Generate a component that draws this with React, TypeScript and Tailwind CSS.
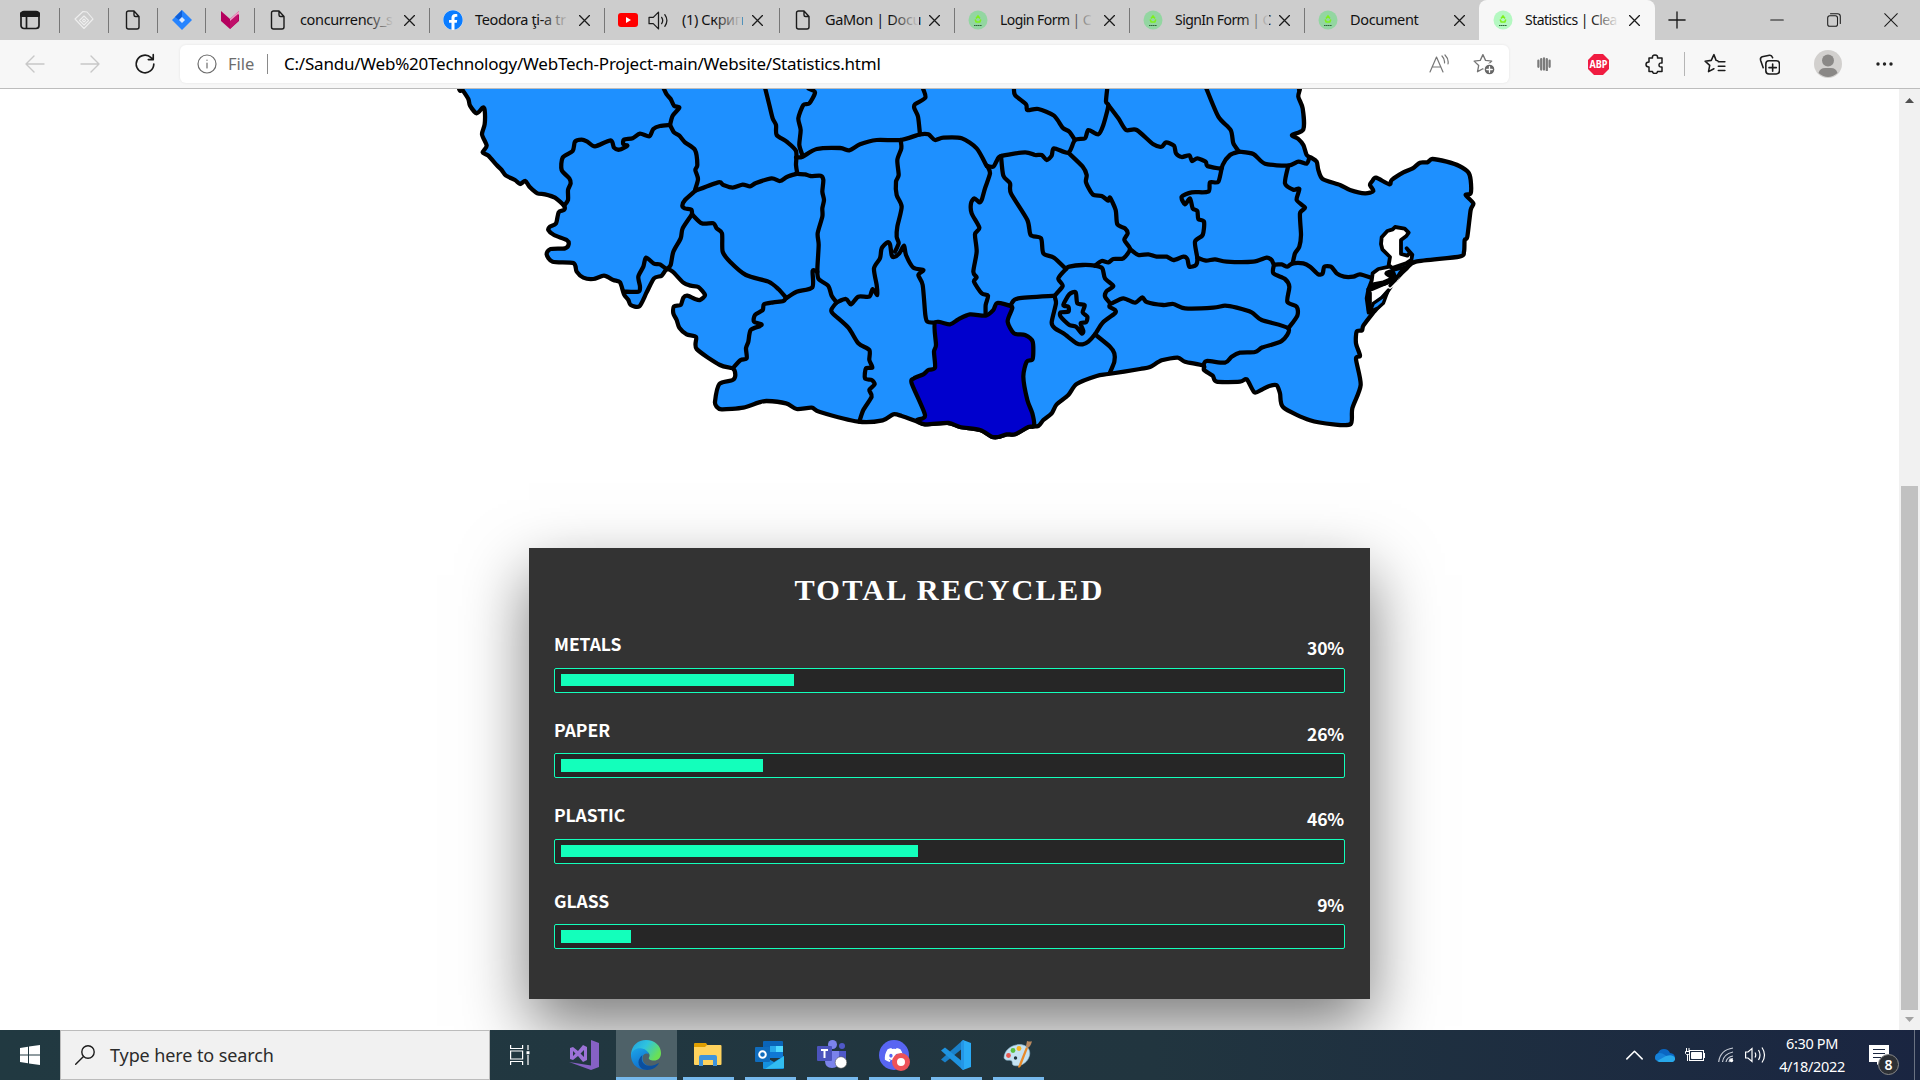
import React from "react";
import { FaDiscord, FaFacebook } from "react-icons/fa";

/* ---------- Map ---------- */

type Line = [number, string];

const parse = ([dx, s]: Line) =>
  s.trim().split(/\s+/).map((p) => {
    const [x, y] = p.split(",").map(Number);
    return [x + dx, y];
  });

function curve(pts: number[][], closed = false) {
  const n = pts.length;
  const at = (i: number) => (closed ? pts[(i + n) % n] : pts[Math.max(0, Math.min(n - 1, i))]);
  const k = 0.13;
  let d = `M${pts[0][0]} ${pts[0][1]}`;
  for (let i = 0; i < (closed ? n : n - 1); i++) {
    const a = at(i - 1), b = at(i), c = at(i + 1), e = at(i + 2);
    d += `C${b[0] + (c[0] - a[0]) * k} ${b[1] + (c[1] - a[1]) * k} ${c[0] - (e[0] - b[0]) * k} ${c[1] - (e[1] - b[1]) * k} ${c[0]} ${c[1]}`;
  }
  return closed ? d + "Z" : d;
}

const W = 0;
const M = 990;
const E = 1770;

const coast: Line[] = [
  [W, "-60,-400 20,-14 37,14 55,42 60,62 80,85 98,68 104,75 104,118 96,148 110,182 98,202 115,212 140,240 155,255 168,272 195,285 210,297 226,288 240,307 262,325 285,328 315,338 342,362 342,375 326,382 318,415 300,425 295,435 312,450 350,465 356,478 345,490 302,492 290,508 308,530 370,534 380,560 400,578 430,582 462,572 490,585 510,592 522,628 535,645 542,660 568,664 590,622 612,580 635,572 650,553 668,560 700,593 722,602 745,606 765,630 750,645 735,642 712,632 700,638 692,660 672,664 670,685 680,705 688,728 710,748 738,756 740,792 810,840 848,850 856,870 848,885 808,897 795,950 800,965 815,973 880,968 925,953 950,948"],
  [M, "18,955 50,972 95,968 120,981 235,1010 308,1006 340,988 365,993 412,1010 435,1018 505,1014 540,1026 600,1035 635,1055 655,1056 680,1048 705,1048 745,1026 775,1023 790,1005 815,985 830,958 865,930 890,897"],
  [E, "170,873 205,867 300,852 330,846 365,826 413,818 435,830 490,842 492,855 518,872 530,890 600,890 620,883 643,922 665,914 688,903 710,901 720,925 730,967 810,1006 880,1018 932,1017 937,970 962,900 948,822 960,812 948,775 950,740 966,736 970,722 998,685 1015,665 1045,615 1075,575 1100,550 1128,530 1258,515 1272,500 1274,465 1282,455 1292,375 1300,355 1277,330 1292,325 1292,285 1285,262 1258,243 1220,230 1177,222 1162,232 1140,233 1118,250 1090,262 1055,285 1048,298 1008,278 997,288 990,300 1000,318 975,325 930,315 900,300 848,282 835,255 830,230 812,217 800,210 790,180 775,162 756,150 790,133 788,70 775,35 780,10 776,-14 776,-400"],
];

const borders: Line[] = [
  [W, "640,8 650,28 662,42 672,62 688,68 668,92 660,120"],
  [W, "342,362 354,345 354,315 362,295 358,280 335,255 338,218 368,198 375,170 395,164 412,170 435,184 482,166 492,188 508,194 532,182 520,178 522,164 548,160 570,146 598,154 610,132 630,123 660,120"],
  [W, "660,120 672,142 688,152 705,172 735,195 742,240 736,255 744,282 735,315"],
  [W, "735,318 805,292 820,300 848,308 878,299 900,304 918,294 965,280 990,288 1012,275 1042,266"],
  [W, "735,318 705,345 697,362 704,370 724,374 726,388"],
  [W, "726,388 698,430 692,460 670,500 662,540 650,553"],
  [W, "726,388 755,415 790,415 800,430 816,445 818,500 840,530 888,570 955,590 985,612 1008,638"],
  [W, "945,8 958,60 968,100 978,120 980,150 1010,170 1038,198 1038,240 1042,266"],
  [W, "522,620 565,620 570,605 565,575 580,545 588,518 612,536 630,538 650,553"],
  [W, "1008,638 1000,648 970,652 942,658 938,675 915,690 912,710 934,718 930,723 902,735 895,770 888,790 890,820 872,825 848,850"],
  [M, "85,10 105,22 88,55 70,60 55,100 62,135 58,180 68,212"],
  [M, "48,217 68,215 110,192 180,189 208,196 240,178 290,165 362,165 420,148 445,148 465,165 490,158 545,160 590,190 620,243"],
  [M, "428,8 436,38 405,58 403,70 414,95 420,148"],
  [M, "48,266 75,268 92,273 122,272 130,285 127,320 132,345 127,370 127,395 113,445 116,480 112,555 116,582 145,603 155,632 170,652"],
  [M, "18,640 50,620 97,607 98,558 112,560"],
  [M, "362,165 364,190 352,225 356,270 348,290 350,330 365,365 352,425 350,455 356,475 345,500"],
  [M, "170,652 198,642 213,658 235,635 268,635 278,612 292,630 290,600 282,550 300,520 305,490 322,472 330,478 335,510 342,516 358,505 372,482 378,510 400,548 430,555 415,570 428,600 436,690 442,710 465,713"],
  [M, "170,652 155,672 158,685 205,728 235,775 268,795 268,825 277,848 258,850 255,880 275,885 284,898 268,915 275,935 250,975 238,1010"],
  [M, "622,243 640,245 650,228 663,213 735,202 765,210 785,210 800,225 815,212 822,190 865,203 885,165 915,160 925,135 955,148 970,120 985,62 978,50 982,8"],
  [M, "702,8 705,30 738,58 742,75 775,72 822,92 848,128 868,140 885,165"],
  [M, "622,243 630,265 615,310 605,345 598,352 583,340 573,355 575,385 598,428 585,448 590,500 580,560 590,577 582,590 605,625 624,632 617,660 617,690"],
  [M, "663,213 670,272 690,295 693,325 742,405 752,450 783,460 790,505 822,518 858,552"],
  [M, "865,203 908,245 920,270 918,292 938,328 965,333 985,347 990,338 1007,375 1012,418 1035,430 1043,445 1033,465 1050,492 1030,520 1000,522 985,532 965,528 945,542"],
  [M, "825,632 715,640 695,655 694,664"],
  [M, "945,748 990,785 1003,805 1003,830 990,862"],
  [E, "205,60 235,100 258,135 290,135 340,178 365,185 378,172 402,182 408,205 425,216 448,211 456,228 472,220 497,230 502,243 535,250 545,250"],
  [E, "498,8 535,95 572,135 580,175 597,200"],
  [E, "597,200 570,210 548,240 535,290 510,292 505,320 455,322 425,335 435,358 450,340 458,370 472,378 475,402 492,410 488,450 465,470 472,520 468,540 448,545 442,522 430,515 400,525 380,515 350,515 325,508 295,510 270,492"],
  [E, "597,200 640,207 675,236 745,242 775,230 800,236 808,218"],
  [E, "745,242 735,295 760,314 778,312 770,345 795,368 780,385 783,450 778,485 765,505 758,535"],
  [E, "472,518 498,527 525,523 560,530 640,530 680,518 695,525 702,538 725,538 742,545 758,535 790,535 810,545 835,568 848,565 853,545 873,545 890,565 912,575 940,575 960,568 998,580"],
  [E, "702,538 700,565 735,582 748,605 742,650 770,665 772,692 745,730"],
  [E, "215,655 250,640 285,653 307,637 320,651 370,660 400,657 435,670 520,668 555,662 590,668 635,682 665,705 745,730 725,768 668,787 645,801 600,803 575,815 555,833 500,828 490,842"],
];

const rings: Line[] = [
  [M, "945,542 908,540 868,545 858,552 835,580 848,603 825,632 828,655 815,712 825,730 850,745 890,775 908,778 925,770 945,748 968,713 1005,685 1005,675 988,665 990,655 975,635 980,618 1000,603 975,580 967,550"],
  [M, "887,622 868,628 850,660 865,665 865,680 842,682 842,695 868,720 888,725 905,745 910,738 902,715 918,712 922,695 908,682 914,660 892,655"],
];

const teleorman: Line = [M, "465,713 510,718 535,703 570,688 617,692 640,675 652,654 694,664 695,675 683,710 702,745 735,750 758,770 758,822 740,830 730,875 742,945 757,985 762,1023 745,1026 705,1048 680,1048 655,1056 635,1055 600,1035 540,1026 505,1014 435,1018 412,1005 435,990 395,895 402,880 430,868 445,855 465,848 462,800 468,780"];

function CountyMap() {
  return (
    <svg className="block h-[361px] w-[1899px]" viewBox="-1350 12 5697 1083" fill="none" stroke="#000" strokeWidth="12.800" strokeLinejoin="round" strokeLinecap="round">
      <path fill="#1e90ff" d={curve(coast.flatMap(parse), true)} />
      {borders.map((b, i) => <path key={i} d={curve(parse(b))} />)}
      {rings.map((b, i) => <path key={i} d={curve(parse(b), true)} />)}
      <path fill="#0000cd" d={curve(parse(teleorman), true)} />
      <g transform="translate(2550 375)" strokeWidth="11.500">
        <path fill="#fff" stroke="none" d="M268 172L235 178L218 190L215 215L205 240L200 265L206 300L222 275L258 245L285 228L300 200L275 190Z" />
        <path fill="#fff" d="M285 51L314 56L326 68L319 78L303 90V132L322 137L330 128L320 115L337 134L334 150L318 160L276 174L266 165L270 141L247 118L243 102L245 82L262 63L278 58Z" />
        <path d="M268 170L235 177L218 190L215 212L205 238L200 265L206 308" />
        <path strokeWidth="17" d="M208 238L222 225L250 220L285 205L262 190L270 187L292 198" />
        <path strokeWidth="15" d="M208 250L208 300M218 235L270 212" />
        <path fill="#1e90ff" strokeWidth="10" d="M210 305L220 280L245 263L265 240L250 280L235 293Z" />
        <path fill="#1e90ff" strokeWidth="10" d="M278 180L315 172L335 160L300 188L285 212L270 227L287 203Z" />
      </g>
    </svg>
  );
}

/* ---------- Browser chrome ---------- */

const Stroke = ({ size, children, color = "#1b1b1b", w = 1.4 }: { size: number; children: React.ReactNode; color?: string; w?: number }) => (
  <svg width={size} height={size} viewBox="0 0 20 20" fill="none" stroke={color} strokeWidth={w} strokeLinecap="round" strokeLinejoin="round" className="shrink-0">
    {children}
  </svg>
);

const PageIcon = () => (
  <Stroke size={20}><path d="M5.500 1H11l5 5.500V17a2 2 0 0 1-2 2H5.500a2 2 0 0 1-2-2V3a2 2 0 0 1 2-2M11 1v4a1.500 1.500 0 0 0 1.500 1.500H16" /></Stroke>
);

const CleanIcon = ({ active }: { active?: boolean }) => (
  <svg width="20" height="20" viewBox="0 0 20 20" className="shrink-0">
    <circle cx="10" cy="10" r="9.500" fill={active ? "#b4f8c1" : "#93d6a1"} />
    <path d="M8 8.500L10 6l2 2.500M12.800 9.500L11.800 12H8.200L7.200 9.500" fill="none" stroke="#7df01c" strokeWidth="1.600" />
    <path d="M6 15.500h8" stroke="#31623b" strokeWidth="1.200" strokeDasharray="1.500 .4" />
  </svg>
);

const YouTube = () => (
  <svg width="20" height="20" viewBox="0 0 20 20" className="shrink-0"><rect y="3" width="20" height="14" rx="3" fill="#f00" /><path d="M8 7v6l5-3z" fill="#fff" /></svg>
);

const Cross = () => <Stroke size={11} w={2.300}><path d="M1 1l18 18M19 1L1 19" /></Stroke>;

const Divider = () => <span className="h-[25px] w-px shrink-0 bg-[#777]" />;

function Tab({ icon, title, active, audio, tight }: { icon: React.ReactNode; title: string; active?: boolean; audio?: boolean; tight?: boolean }) {
  const fade = active ? "to-[#f7f7f7]" : "to-[#cdcdcd]";
  return (
    <div className={active ? "flex h-10 w-[176px] shrink-0 items-center rounded-t-lg bg-[#f7f7f7]" : "flex h-10 w-[175px] shrink-0 items-center"}>
      {active ? <span className="w-px" /> : <Divider />}
      <span className="ml-[13px] flex w-5">{icon}</span>
      {audio && (
        <span className="ml-[10px] flex">
          <Stroke size={21} w={1.200}><path d="M1 7h4l5-5v16l-5-5H1zM13 7q2 3 0 6M16 4.500q4 5.500 0 11" /></Stroke>
        </span>
      )}
      <span className={audio ? "relative ml-[13px] w-[60px] whitespace-nowrap" : "relative ml-3 w-[94px] whitespace-nowrap"}>
        <span className={tight ? "text-[14px] tracking-[-0.550px]" : ""}>{title}</span>
        {title !== "Document" && <span className={`absolute inset-y-0 right-0 w-7 bg-linear-to-r from-transparent ${fade}`} />}
      </span>
      <span className="ml-[10px] flex">
        <Cross />
      </span>
    </div>
  );
}

function TabStrip() {
  return (
    <div className="flex h-10 items-center bg-[#cdcdcd] text-[14.500px] tracking-[-0.35px] text-[#111]">
      <span className="flex w-[59px] shrink-0 justify-center">
        <Stroke size={20} w={1.700}><rect x="1" y="1.500" width="18" height="17" rx="3" /><path d="M2 4.500h16" strokeWidth="5" /><path d="M6.500 6v12" /></Stroke>
      </span>
      <Divider />
      <span className="flex w-12 shrink-0 justify-center">
        <Stroke size={20} color="#eee" w={1.100}><path d="M9 1.500l4 .5 6 7-9 9.500L1 9zM10 6l4.500 4.500L10 15l-4.500-4.500zM10 9l1.500 1.500L10 12l-1.500-1.500z" /></Stroke>
      </span>
      <Divider />
      <span className="flex w-12 shrink-0 justify-center"><PageIcon /></span>
      <Divider />
      <span className="flex w-[47px] shrink-0 justify-center">
        <svg width="20" height="20" viewBox="0 0 20 20"><path d="M10 0l10 10-10 10L0 10z" fill="#2684ff" /><path d="M10 0v7l-3 3-4-3z" fill="#0f5fd8" /><path d="M10 7l3 3-3 3-3-3z" fill="#dbe9ff" /></svg>
      </span>
      <Divider />
      <span className="flex w-12 shrink-0 justify-center">
        <svg width="20" height="18" viewBox="0 0 20 18"><path d="M1 0l9 8v10L1 10z" fill="#b4005e" /><path d="M19 0l-9 8v10l9-8z" fill="#b4005e" /><path d="M19 0l-9 8v4l9-9z" fill="#f0a0c8" /><path d="M18 3l-8 7v8l8-8z" fill="#c0106a" /></svg>
      </span>
      <Tab icon={<PageIcon />} title="concurrency_s" />
      <Tab icon={<span className="flex size-5 items-center justify-center rounded-full bg-white"><FaFacebook size={20} color="#0a7cff" /></span>} title="Teodora ţi-a tr" />
      <Tab icon={<YouTube />} title="(1) Скрип" audio />
      <Tab icon={<PageIcon />} title="GaMon | Docu" />
      <Tab icon={<CleanIcon />} title="Login Form | C" tight />
      <Tab icon={<CleanIcon />} title="SignIn Form | C" tight />
      <Tab icon={<CleanIcon />} title="Document" />
      <Tab icon={<CleanIcon active />} title="Statistics | Clea" active tight />
      <span className="ml-[13px] flex"><Stroke size={18} w={1.500}><path d="M10 1v18M1 10h18" /></Stroke></span>
      <span className="ml-auto flex items-center gap-[43px] pr-[22px]">
        <Stroke size={14} w={1.500}><path d="M1 10h18" /></Stroke>
        <Stroke size={14} w={1.500}><rect x="1" y="4" width="14" height="15" rx="3" /><path d="M5 1h10q4 0 4 4v10" /></Stroke>
        <Stroke size={14} w={1.500}><path d="M1 1l18 18M19 1L1 19" /></Stroke>
      </span>
    </div>
  );
}

const Star = "M9 1.500l2.400 5.200 5.600.7-4.200 3.900 1.100 5.700L9 14.300 4.100 17l1.100-5.700L1 7.400l5.600-.7z";

function Toolbar() {
  return (
    <div className="flex h-[49px] items-center border-b border-[#bdbdbd] bg-[#f7f7f7]">
      <span className="ml-[25px] flex"><Stroke size={20} color="#c8c8c8"><path d="M19 10H1M9 2l-8 8 8 8" /></Stroke></span>
      <span className="ml-[35px] flex"><Stroke size={20} color="#c8c8c8"><path d="M1 10h18M11 2l8 8-8 8" /></Stroke></span>
      <span className="ml-[34px] flex"><Stroke size={22} w={1.500}><path d="M18 10a8 8 0 1 1-2.500-5.800L17.500 6M17.500 1.500V6H13" /></Stroke></span>
      <div className="ml-[24px] flex h-[38px] w-[1329px] items-center rounded-md bg-white text-[17px] shadow-[0_0_3px_rgba(0,0,0,0.08)]">
        <span className="ml-[17px] flex"><Stroke size={20} color="#6d6d6d" w={1.200}><circle cx="10" cy="10" r="9" /><path d="M10 9v5M10 6v.3" /></Stroke></span>
        <span className="ml-[11px] w-[27px] text-[16.500px] text-[#6d6d6d]">File</span>
        <span className="ml-[12px] h-5 w-px bg-[#8a8a8a]" />
        <span className="ml-[16px] w-[610px] whitespace-nowrap text-[17px] tracking-[-0.220px] text-black">C:/Sandu/Web%20Technology/WebTech-Project-main/Website/Statistics.html</span>
        <span className="ml-auto mr-[24px] flex"><Stroke size={20} color="#767676" w={1.200}><path d="M1 18L7.500 3 14 18M3 13h9M13 2q3 3 2.500 7M16 1q4 4 3 9" /></Stroke></span>
        <span className="mr-[14px] flex">
          <Stroke size={22} color="#767676" w={1.200}><path d={Star} /><circle cx="15" cy="15" r="5" fill="#666" stroke="#fff" /><path d="M15 12.500v5M12.500 15h5" stroke="#fff" /></Stroke>
        </span>
      </div>
      <span className="ml-[28px] flex"><Stroke size={14} color="#7b7b7b" w={3.200}><path d="M2 5v9M6 3v15M10 2v16M14 3v16M18 5v9" /></Stroke></span>
      <svg className="ml-[37px]" width="21" height="21" viewBox="0 0 21 21">
        <path d="M6 0h9l6 6v9l-6 6H6l-6-6V6z" fill="#f01c41" />
        <text x="10.500" y="14.200" textAnchor="middle" fontSize="10" fontWeight="700" fill="#fff" fontFamily="Noto Sans" textLength="18" lengthAdjust="spacingAndGlyphs">ABP</text>
      </svg>
      <span className="ml-[36px] flex"><Stroke size={20} w={1.500}><path d="M4 4h3.500q-.5-3 2.500-3t2.500 3H17v5q-3-.5-3 2t3 2v4.500h-4.500q0 2-2.500 2t-2.500-2H4V13q-3 0-3-2.500T4 8z" /></Stroke></span>
      <span className="ml-[19px] h-[24px] w-px bg-[#b5b5b5]" />
      <span className="ml-[19px] flex"><Stroke size={22} w={1.400}><path d="M12.500 7.100L11 6.700 9 1.500 6.600 6.700 1 7.400l4.200 3.900L4.100 17 9 14.300M13 8h6M13 12h6M13 16h6" /></Stroke></span>
      <span className="ml-[33px] flex"><Stroke size={21} w={1.500}><rect x="6.500" y="6.500" width="13" height="12.500" rx="3" /><path d="M13 9.500v7M9.500 13h7M4 13L1.500 6q-.6-2.500 1.500-3.300l7-1.500q2-.3 3 2.300" /></Stroke></span>
      <svg className="ml-[34px]" width="28" height="28" viewBox="0 0 28 28"><circle cx="14" cy="14" r="14" fill="#d2d0ce" /><circle cx="14" cy="10.500" r="6" fill="#8a8886" /><path d="M4.500 23Q6 18 11 18h6q5 0 6.500 5-9.500 8-19 0z" fill="#8a8886" /></svg>
      <svg className="ml-[34px]" width="17" height="4" viewBox="0 0 17 4" fill="#222"><circle cx="2" cy="2" r="1.700" /><circle cx="8.500" cy="2" r="1.700" /><circle cx="15" cy="2" r="1.700" /></svg>
    </div>
  );
}

function Scrollbar() {
  return (
    <div className="flex h-full w-[21px] flex-col items-center bg-[#f1f1f1]">
      <svg className="mt-[9px]" width="9" height="5" viewBox="0 0 9 5"><path d="M0 5L4.500 0 9 5z" fill="#505050" /></svg>
      <div className="mt-[383px] h-[524px] w-[17px] bg-[#c1c1c1]" />
      <svg className="mt-[7px]" width="9" height="5" viewBox="0 0 9 5"><path d="M0 0l4.500 5L9 0z" fill="#a3a3a3" /></svg>
    </div>
  );
}

/* ---------- Statistics card ---------- */

const stats = [
  { name: "METALS", value: 30 },
  { name: "PAPER", value: 26 },
  { name: "PLASTIC", value: 46 },
  { name: "GLASS", value: 9 },
];

function StatsCard() {
  return (
    <section className="mx-auto mt-[98px] h-[451px] w-[841px] bg-[#333] px-[25px] pt-[25px] text-white shadow-[0_27px_62px_rgba(0,0,0,0.52)]">
      <h1 className="h-[57px] text-center font-['Liberation_Serif',serif] text-[30.300px] leading-[35px] font-bold tracking-[2.200px]">TOTAL RECYCLED</h1>
      {stats.map((s) => (
        <div key={s.name} className="h-[85.500px] font-['Noto_Sans_CJK_SC',sans-serif] text-[17.500px] font-bold">
          <div className="flex h-[37.800px] justify-between leading-[27.500px]">
            <span className="tracking-[-0.050px]">{s.name}</span>
            <span className="pt-1 pr-px tracking-[-0.200px]">{s.value}%</span>
          </div>
          <div className="h-[25px] rounded-[2px] border border-[#13ffbb] bg-[#262626] px-[6px] pt-[5px] pb-[5.400px]">
            <div className="h-full bg-[#13ffbb]" style={{ width: `${s.value}%` }} />
          </div>
        </div>
      ))}
    </section>
  );
}

/* ---------- Taskbar ---------- */

const VisualStudio = () => (
  <svg width="30" height="30" viewBox="0 0 30 30"><path d="M22 0l8 3v24l-8 3L0 22l22 3.500z" fill="#8661c5" /><path fillRule="evenodd" d="M1 8l3-1 5 4 5-6 4 2v13l-4 2-5-6-5 4-3-1zM4 11v5l2.500-2.500zM15 10l-3.500 3.500L15 17z" fill="#9b72d6" /></svg>
);

const EdgeLogo = () => (
  <svg width="30" height="30" viewBox="0 0 30 30">
    <defs>
      <linearGradient id="edgeTop" x1="0" y1="0" x2="1" y2="0.500"><stop offset="0" stopColor="#1f9fe0" /><stop offset="0.500" stopColor="#2fc3df" /><stop offset="1" stopColor="#6ae055" /></linearGradient>
      <linearGradient id="edgeLeft" x1="0" y1="0" x2="0.500" y2="1"><stop offset="0" stopColor="#1ca5e8" /><stop offset="1" stopColor="#0f6ccb" /></linearGradient>
    </defs>
    <path d="M0 14C1 5 7 0 15 0c9 0 15 6 15 13 0 5-3 7.500-7 7.500-4 0-6-1.500-5-3 2-3-1-7-6-7-5 0-10 2-12 7z" fill="url(#edgeTop)" />
    <path d="M0 15C1 10 6 7.500 11 8.500c4 .7 6 3 7 6-2-2-6-1-6.500 3C11 23 16 27 22 26c-2 3-7 4-10 3.500C5 28.500 0 23 0 15z" fill="url(#edgeLeft)" />
    <path d="M11.500 15c-3 8 4 12 10 10.500 3-.7 5-2 6.500-2.500-3 6-10 8-15 6.500-6-2-8-9-1.500-14.500z" fill="#0b4f9e" />
  </svg>
);

const Explorer = () => (
  <svg width="28" height="24" viewBox="0 0 28 24"><path d="M0 1q0-1 1-1h11l2 3-2 2H0z" fill="#e09f00" /><path d="M0 4h11l2-2h13.500q1 0 1 1v18q0 1-1 1h-25.500q-1 0-1-1z" fill="#ffd35e" /><path d="M5 23v-9q0-2 2-2h14q2 0 2 2v9h-4v-6H9v6z" fill="#3f94dc" /></svg>
);

const Outlook = () => (
  <svg width="30" height="28" viewBox="0 0 30 28"><path d="M9 0h18q1 0 1 1v16H8V1q0-1 1-1z" fill="#0a64b8" /><path d="M15 5h13v6H15z" fill="#28a8ea" /><path d="M21 5h7v6h-7z" fill="#50d9ff" /><path d="M15 11h13v6H15z" fill="#0f78d4" /><path d="M8 15l11 6 10-6v12q0 1-1 1H9q-1 0-1-1z" fill="#1490df" /><path d="M29 15v12L10 28z" fill="#32bdf0" /><rect y="6" width="15" height="15" rx="1" fill="#0f6cbd" /><circle cx="7.500" cy="13.500" r="3.300" fill="none" stroke="#fff" strokeWidth="2" /></svg>
);

const Teams = () => (
  <svg width="30" height="29" viewBox="0 0 30 29"><circle cx="15.500" cy="4.500" r="4.500" fill="#7b83eb" /><circle cx="25" cy="6" r="3" fill="#5059c9" /><path d="M20 11h9v8q0 4-5 4h-4z" fill="#5059c9" /><path d="M8 11h14v10q0 7-7 7t-7-7z" fill="#7b83eb" /><rect y="6" width="15" height="15" rx="1" fill="#4b53bc" /><path d="M4 10h7M7.500 10v8" stroke="#fff" strokeWidth="2" /><circle cx="24" cy="22.500" r="5.800" fill="#fff" stroke="#555" strokeWidth=".6" /></svg>
);

const Discord = () => (
  <span className="relative flex size-[30px] items-center justify-center rounded-full bg-[#5865f2]">
    <FaDiscord size={20} color="#fff" />
    <span className="absolute top-[13px] left-[13px] size-[18px] rounded-full border-[5px] border-[#ed5258] bg-white" />
  </span>
);

const VSCode = () => (
  <svg width="30" height="30" viewBox="0 0 30 30"><path d="M22 0l8 3v24l-8 3z" fill="#2aaaf5" /><path d="M22 0v8L4 22.500 0 19.500z" fill="#1a80c9" /><path d="M22 30v-8L4 7.500 0 10.500z" fill="#1f93e0" /><path d="M22 0l1 .5v29l-1 .5L20 28V2z" fill="#2496e6" /></svg>
);

const Paint = () => (
  <svg width="30" height="29" viewBox="0 0 30 29">
    <path d="M1 18C1 9 11 3 20 5c6 1.500 8 7 6 12-2 6-9 10-15 8.500-3-1-.5-4-3-5s-5 1-7-2.500z" fill="#c4e2f2" stroke="#8fb9cf" strokeWidth=".6" />
    <circle cx="5.500" cy="15.500" r="2.400" fill="#e8584f" /><circle cx="10" cy="10.500" r="2.400" fill="#5bbf3f" /><circle cx="16" cy="8.500" r="2.400" fill="#f7b11e" /><circle cx="12.500" cy="18" r="1.700" fill="#22363f" />
    <path d="M15 27l8-20 2 1-7 18q-2 3-3 1z" fill="#e88a2a" /><path d="M23 6l1-5q4 1 5 0-1 5-4 7z" fill="#b98a60" />
  </svg>
);

const apps = [
  { name: "Explorer", icon: <Explorer /> },
  { name: "Outlook", icon: <Outlook /> },
  { name: "Teams", icon: <Teams /> },
  { name: "Discord", icon: <Discord /> },
  { name: "Code", icon: <VSCode /> },
  { name: "Paint", icon: <Paint /> },
];

function Taskbar() {
  return (
    <footer className="flex h-[50px] items-center bg-linear-to-r from-[#213941] via-[#21353f] via-60% to-[#1a2541]">
      <span className="flex w-[60px] justify-center">
        <svg width="20" height="20" viewBox="0 0 20 20" fill="#fff"><path d="M0 3l8-1.200v7.700H0zM9 1.600L20 0v9.500H9zM0 10.500h8v7.700L0 17zM9 10.500h11V20L9 18.400z" /></svg>
      </span>
      <div className="flex h-[50px] w-[430px] items-center border border-[#bcbcbc] bg-[#f1f1f1]">
        <span className="ml-[14px] flex"><Stroke size={20} w={1.400}><circle cx="13" cy="7" r="6.200" /><path d="M8.500 11.500L.7 19.300" /></Stroke></span>
        <span className="ml-[15px] text-[18px] tracking-[-0.100px] text-[#2b2b2b]">Type here to search</span>
      </div>
      <span className="flex w-[60px] justify-center">
        <svg width="20" height="20" viewBox="0 0 20 20" fill="none" stroke="#fff" strokeWidth="1.200"><path d="M.6 0v3.500h12V0M.6 6h12v8H.6zM.6 20v-3.500h12V20M18 0v5M18 10v10" /><path d="M16.500 6.200h3v3h-3z" fill="#fff" stroke="none" /></svg>
      </span>
      <span className="ml-[19px] flex w-[47px]"><VisualStudio /></span>
      <div className="flex h-full w-[61px] items-center justify-center border-b-[3px] border-[#76b9ed] bg-[#4e6168] pt-0.5 pr-px"><EdgeLogo /></div>
      <div className="ml-[6px] flex h-full gap-[11px]">
        {apps.map((a) => (
          <div key={a.name} className="flex h-full w-[51px] items-center justify-center border-b-[3px] border-[#76b9ed] pt-0.5 pr-[2px]">{a.icon}</div>
        ))}
      </div>
      <div className="ml-auto flex h-full items-center text-white">
        <Stroke size={17} color="#fff" w={1.800}><path d="M1 14l9-9 9 9" /></Stroke>
        <svg className="ml-[12px]" width="20" height="13" viewBox="0 0 20 13"><path d="M4 12a4 4 0 0 1-1-7.800A6.500 6.500 0 0 1 15 4q5 .5 5 5z" fill="#0a66c2" /><path d="M0 9q0-4 4-5 3-.3 6 2l7 6H4q-4 0-4-3z" fill="#1580d8" /><path d="M2 12l9-5q7-2 9 2 .5 4-4 4H4z" fill="#28a8ea" /></svg>
        <svg className="ml-[10px]" width="20" height="14" viewBox="0 0 20 14" fill="none" stroke="#fff"><rect x="4.500" y="2.500" width="14" height="10" /><path d="M6.500 4.500h10v6h-10z" fill="#fff" /><path d="M19.500 5v5M1.500 0v3M4 0v3M.5 3.500h4v2l-1 1h-2l-1-1zM2.500 7v6" /></svg>
        <svg className="ml-[13px]" width="16" height="16" viewBox="0 0 16 16" fill="none" stroke="#c9ced8" strokeWidth="1.200"><path d="M.7 15Q2 3 15 1M4.500 15Q5.500 7 15 5M8 15Q9 10 15 9M11 15l1-3 3-.5" /><circle cx="13.500" cy="13.500" r="1.700" fill="#fff" stroke="none" /></svg>
        <svg className="ml-[11px]" width="21" height="18" viewBox="0 0 21 18" fill="none" stroke="#fff" strokeWidth="1.200"><path d="M.6 6v6H3l4 3.500v-13L3 6zM10 6.500q1.500 2.500 0 5M13.500 4q3 5 0 10M17 1.500q5 7.500 0 15" /></svg>
        <div className="ml-[9px] flex w-[74px] flex-col items-center text-[14.500px] leading-[23px] tracking-[-0.350px] whitespace-nowrap"><span>6:30 PM</span><span>4/18/2022</span></div>
        <span className="ml-[20px] flex w-[45px]">
          <span className="relative">
            <svg width="20" height="21" viewBox="0 0 20 21"><path d="M0 0h20v17h-8l-4 3v-3H0z" fill="#fff" /><path d="M4 4.500h12M4 8.500h12M4 12.500h8" stroke="#1b2740" strokeWidth="1.200" /></svg>
            <span className="absolute top-[9px] left-[9px] flex size-[21px] items-center justify-center rounded-full border border-[#888] bg-[#2d3035] text-[14px] font-semibold">8</span>
          </span>
        </span>
        <span className="mr-[5px] h-full w-px bg-[#6a7282]" />
      </div>
    </footer>
  );
}

export default function App() {
  return (
    <div className="flex h-[1080px] w-[1920px] flex-col overflow-hidden bg-white font-['Noto_Sans',sans-serif]">
      <TabStrip />
      <Toolbar />
      <div className="flex h-[941px] overflow-hidden">
        <main className="h-full w-[1899px] overflow-hidden">
          <CountyMap />
          <StatsCard />
        </main>
        <Scrollbar />
      </div>
      <Taskbar />
    </div>
  );
}
